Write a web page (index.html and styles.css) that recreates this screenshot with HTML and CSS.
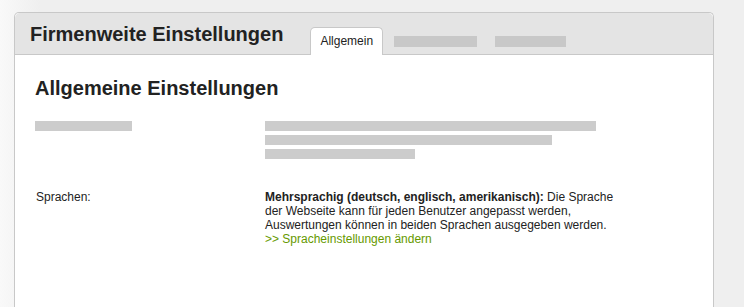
FILE: index.html
```html
<!DOCTYPE html>
<html lang="de">
<head>
    <meta charset="UTF-8">
    <meta name="viewport" content="width=device-width, initial-scale=1.0">
    <title>Firmenweite Einstellungen</title>
    <link rel="stylesheet" href="styles.css">
</head>
<body>
    <div class="panel">
        <div class="panel-head">
            <h1>Firmenweite Einstellungen</h1>
            <div class="tabs">
                <a class="tab active" href="#">Allgemein</a>
                <span class="tab-ph" style="width: 83px"></span>
                <span class="tab-ph" style="width: 71px"></span>
            </div>
        </div>

        <div class="panel-body">
            <h2>Allgemeine Einstellungen</h2>

            <div class="row">
                <div class="label">
                    <span class="ph" style="width: 97px"></span>
                </div>
                <div class="value">
                    <span class="ph" style="width: 331px"></span>
                    <span class="ph" style="width: 287px"></span>
                    <span class="ph" style="width: 150px"></span>
                </div>
            </div>

            <div class="row">
                <div class="label">Sprachen:</div>
                <div class="value">
                    <strong>Mehrsprachig (deutsch, englisch, amerikanisch):</strong> Die Sprache der Webseite kann für jeden Benutzer angepasst werden, Auswertungen können in beiden Sprachen ausgegeben werden.<br>
                    <a class="more" href="#">&gt;&gt; Spracheinstellungen ändern</a>
                </div>
            </div>
        </div>
    </div>
</body>
</html>
```

FILE: styles.css
```css
body {
    margin: 0;
    font-family: "Liberation Sans", Arial, sans-serif;
    font-size: 12px;
    line-height: 14px;
    color: #222;
    background: linear-gradient(to right, #f9f9f9, #efefef 40px);
    height: 307px;
    overflow: hidden;
}
.panel {
    margin: 12px 0 0 14px;
    width: 698px;
    height: 320px;
    border: 1px solid #c8c8c8;
    border-bottom: none;
    border-radius: 5px 5px 0 0;
    background: white;
}
.panel-head {
    display: flex;
    align-items: flex-end;
    height: 41px;
    padding-left: 15px;
    background: #e4e4e4;
    border-bottom: 1px solid #c8c8c8;
    border-radius: 5px 5px 0 0;
}
.panel-head h1 {
    margin: 0 27px 8px 0;
    font-size: 20px;
    line-height: 24px;
    color: #222;
}
.tabs {
    display: flex;
    align-items: flex-end;
    margin-bottom: -1px;
}
.tab {
    display: block;
    height: 27px;
    padding: 0 9px;
    line-height: 26px;
    color: #222;
    text-decoration: none;
    background: white;
    border: 1px solid #c8c8c8;
    border-bottom: none;
    border-radius: 5px 5px 0 0;
}
.tab-ph {
    display: block;
    height: 11px;
    margin: 0 0 8px 11px;
    background: #c8c8c8;
}
.tab-ph + .tab-ph {
    margin-left: 18px;
}
.panel-body {
    padding: 0 20px;
}
.panel-body h2 {
    margin: 0;
    padding: 21px 0 0;
    font-size: 20px;
    line-height: 24px;
    color: #222;
}
.row {
    display: flex;
    margin-top: 21px;
}
.row + .row {
    margin-top: 27px;
}
.label {
    width: 230px;
    padding-left: 1px;
    box-sizing: border-box;
}
.value {
    width: 360px;
}
.ph {
    display: block;
    height: 10px;
    margin-bottom: 4px;
    background: #cccccc;
}
.label .ph {
    margin-left: -1px;
}
.more {
    color: #669900;
    text-decoration: none;
}
```
